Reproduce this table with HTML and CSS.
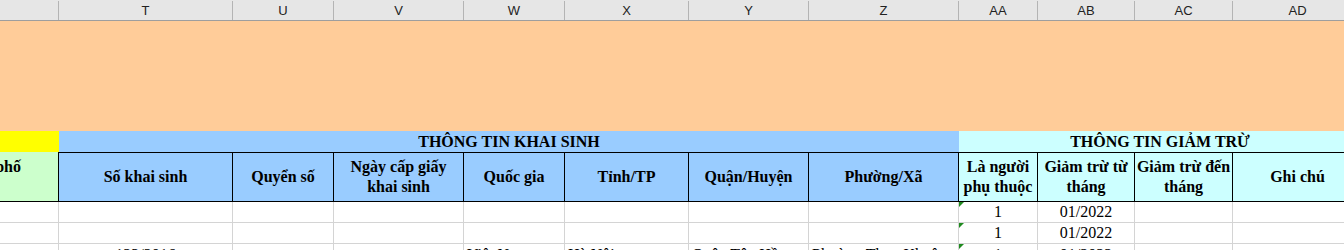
FILE: index.html
```html
<!DOCTYPE html>
<html lang="vi">
<head>
<meta charset="utf-8">
<title>Sheet</title>
<link rel="stylesheet" href="styles.css">
</head>
<body>
<div class="sheet">
  <div class="row colhdr">
    <div class="ch"></div>
    <div class="ch">T</div>
    <div class="ch">U</div>
    <div class="ch">V</div>
    <div class="ch">W</div>
    <div class="ch">X</div>
    <div class="ch">Y</div>
    <div class="ch">Z</div>
    <div class="ch">AA</div>
    <div class="ch">AB</div>
    <div class="ch">AC</div>
    <div class="ch">AD</div>
  </div>
  <div class="band"></div>
  <div class="row titles">
    <div class="t-yellow"></div>
    <div class="t-blue">THÔNG TIN KHAI SINH</div>
    <div class="t-cyan">THÔNG TIN GIẢM TRỪ</div>
  </div>
  <div class="row hdr">
    <div class="h green"><span class="cut">Thành phố</span></div>
    <div class="h blue">Số khai sinh</div>
    <div class="h blue">Quyển số</div>
    <div class="h blue">Ngày cấp giấy<br>khai sinh</div>
    <div class="h blue">Quốc gia</div>
    <div class="h blue">Tỉnh/TP</div>
    <div class="h blue">Quận/Huyện</div>
    <div class="h blue">Phường/Xã</div>
    <div class="h cyan">Là người<br>phụ thuộc</div>
    <div class="h cyan">Giảm trừ từ<br>tháng</div>
    <div class="h cyan">Giảm trừ đến<br>tháng</div>
    <div class="h cyan">Ghi chú</div>
  </div>
  <div class="row data">
    <div class="d"></div><div class="d"></div><div class="d"></div><div class="d"></div>
    <div class="d"></div><div class="d"></div><div class="d"></div><div class="d"></div>
    <div class="d c flag">1</div><div class="d c">01/2022</div><div class="d"></div><div class="d"></div>
  </div>
  <div class="row data">
    <div class="d"></div><div class="d"></div><div class="d"></div><div class="d"></div>
    <div class="d"></div><div class="d"></div><div class="d"></div><div class="d"></div>
    <div class="d c flag">1</div><div class="d c">01/2022</div><div class="d"></div><div class="d"></div>
  </div>
  <div class="row data last">
    <div class="d"></div><div class="d c">123/2016</div><div class="d"></div><div class="d"></div>
    <div class="d">Việt Nam</div><div class="d">Hà Nội</div><div class="d">Quận Tây Hồ</div><div class="d over">Phường Thụy Khuê</div>
    <div class="d c flag">1</div><div class="d c">01/2022</div><div class="d"></div><div class="d"></div>
  </div>
</div>
</body>
</html>
```
FILE: styles.css
```css
html, body {
  margin: 0;
  padding: 0;
  background: #ffffff;
  overflow: hidden;
}
.sheet {
  width: 1344px;
  overflow: hidden;
}
.row {
  display: grid;
  grid-template-columns: 59px 174px 101px 130px 101px 124px 120px 150px 79px 97px 98px 130px;
}
.colhdr {
  height: 21px;
  background: #e6e6e6;
  border-bottom: 1px solid #9e9e9e;
  box-sizing: border-box;
}
.ch {
  font-family: "Liberation Sans", Arial, sans-serif;
  font-size: 13px;
  color: #222;
  text-align: center;
  border-right: 1px solid #b4b4b4;
  box-sizing: border-box;
  margin-top: 1px;
  height: 19px;
  line-height: 19px;
}
.band {
  height: 110px;
  background: #ffcc99;
}
.titles {
  height: 21px;
  font-family: "Liberation Serif", "Times New Roman", serif;
  font-weight: bold;
  font-size: 16px;
  line-height: 21px;
  color: #000;
}
.t-yellow { background: #ffff00; }
.t-blue {
  grid-column: 2 / 9;
  background: #99ccff;
  text-align: center;
}
.t-cyan {
  grid-column: 9 / 13;
  background: #ccffff;
  text-align: center;
  padding-right: 2px;
}
.hdr {
  height: 50px;
  font-family: "Liberation Serif", "Times New Roman", serif;
  font-weight: bold;
  font-size: 16px;
  line-height: 20px;
  color: #000;
}
.h {
  box-sizing: border-box;
  border-right: 1px solid #000;
  border-top: 1px solid #000;
  border-bottom: 1px solid #000;
  display: flex;
  align-items: center;
  justify-content: center;
  text-align: center;
  white-space: nowrap;
}
.h.green {
  background: #ccffcc;
  border-top: none;
  align-items: flex-start;
  justify-content: flex-end;
  overflow: hidden;
  padding-top: 5px;
  padding-right: 37px;
}
.h.blue { background: #99ccff; }
.h.cyan { background: #ccffff; }
.data {
  height: 21px;
  font-family: "Liberation Serif", "Times New Roman", serif;
  font-size: 16px;
  line-height: 20px;
  color: #000;
}
.d {
  box-sizing: border-box;
  border-right: 1px solid #d4d4d4;
  border-bottom: 1px solid #d4d4d4;
  padding: 0 3px;
  white-space: nowrap;
  position: relative;
}
.data.last .d { padding-top: 1px; }
.d.c { text-align: center; }
.d.over { overflow: visible; }
.d.flag::before {
  content: "";
  position: absolute;
  left: 0;
  top: 0;
  border-top: 5px solid #1f8a1f;
  border-right: 5px solid transparent;
}
```
